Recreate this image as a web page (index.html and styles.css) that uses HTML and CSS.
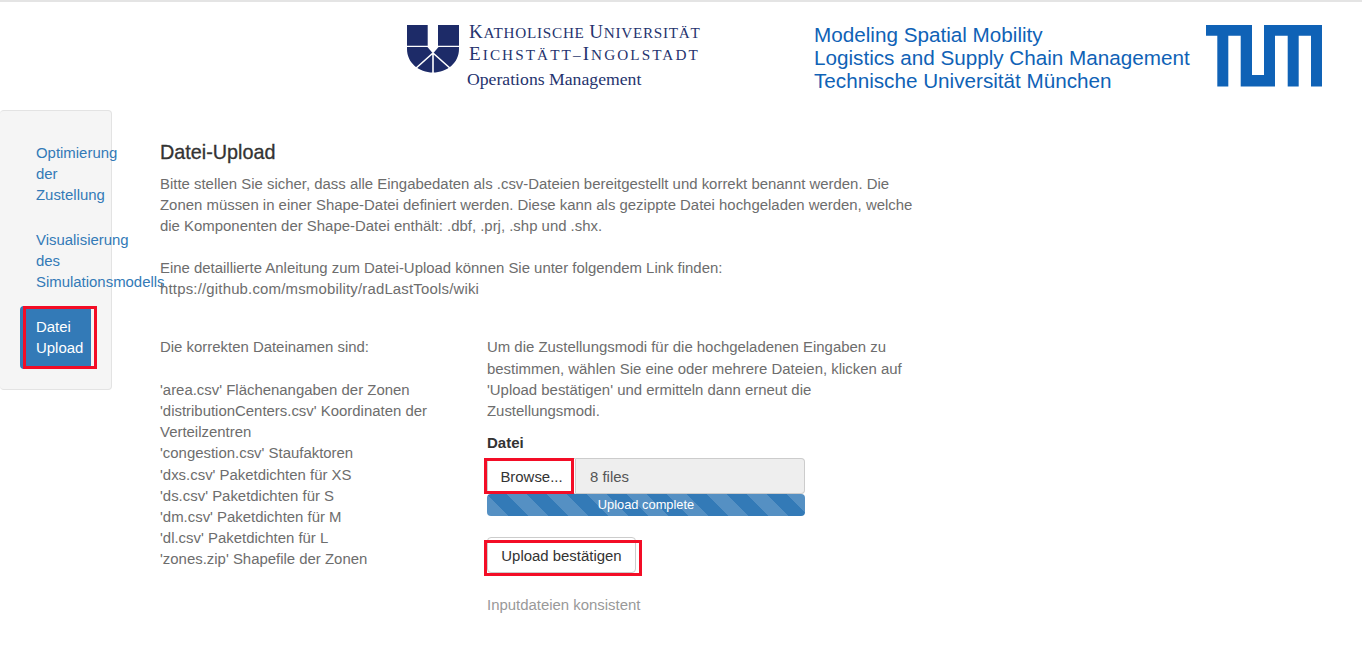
FILE: index.html
```html
<!DOCTYPE html>
<html lang="de">
<head>
<meta charset="utf-8">
<title>Datei-Upload</title>
<link rel="stylesheet" href="styles.css">
</head>
<body>
<header class="header">
  <div class="ku">
    <svg class="ku-mark" viewBox="0 0 52 48" aria-hidden="true">
      <path class="ku-fill" d="M0 0H20.7V20.7H0ZM31 0H52V20.7H31ZM0 22H52V24C52 38 40 47.5 26 47.5C12 47.5 0 38 0 24Z"/>
      <path class="ku-notch" d="M20 21.5L26 28.5L32 21.5Z"/>
      <path class="ku-cut" d="M26 28V48M26 28L7.5 44.5M26 28L44.5 44.5"/>
    </svg>
    <div class="ku-text">
      <div class="ku-line ku-first"><span class="ku-cap">K</span>atholische <span class="ku-cap">U</span>niversität</div>
      <div class="ku-line ku-second"><span class="ku-cap">E</span>ichstätt–<span class="ku-cap">I</span>ngolstadt</div>
      <div class="ku-sub">Operations Management</div>
    </div>
  </div>
  <div class="tum-text">
    <div>Modeling Spatial Mobility</div>
    <div>Logistics and Supply Chain Management</div>
    <div>Technische Universität München</div>
  </div>
  <svg class="tum-mark" viewBox="0 0 116 61.4" aria-hidden="true">
    <path class="tum-fill" d="M0 0H46V50H58V0H116V61.4H105V10.7H92.7V61.4H81.7V10.7H69V61.4H34.7V10.7H22.3V61.4H11.3V10.7H0Z"/>
  </svg>
</header>
<div class="layout">
  <nav class="well">
    <a class="pill" href="#">Optimierung der Zustellung</a>
    <a class="pill" href="#">Visualisierung des Simulationsmodells</a>
    <a class="pill active marked" href="#">Datei Upload</a>
  </nav>
  <main class="main">
    <h1 class="title">Datei-Upload</h1>
    <p class="intro">Bitte stellen Sie sicher, dass alle Eingabedaten als .csv-Dateien bereitgestellt und korrekt benannt werden. Die Zonen müssen in einer Shape-Datei definiert werden. Diese kann als gezippte Datei hochgeladen werden, welche die Komponenten der Shape-Datei enthält: .dbf, .prj, .shp und .shx.</p>
    <p class="intro">Eine detaillierte Anleitung zum Datei-Upload können Sie unter folgendem Link finden:<br><span class="url">https://github.com/msmobility/radLastTools/wiki</span></p>
    <div class="columns">
      <section class="names">
        <p class="names-head">Die korrekten Dateinamen sind:</p>
        <p class="names-list">'area.csv' Flächenangaben der Zonen<br>'distributionCenters.csv' Koordinaten der Verteilzentren<br>'congestion.csv' Staufaktoren<br>'dxs.csv' Paketdichten für XS<br>'ds.csv' Paketdichten für S<br>'dm.csv' Paketdichten für M<br>'dl.csv' Paketdichten für L<br>'zones.zip' Shapefile der Zonen</p>
      </section>
      <section class="upload">
        <p class="upload-text">Um die Zustellungsmodi für die hochgeladenen Eingaben zu bestimmen, wählen Sie eine oder mehrere Dateien, klicken auf 'Upload bestätigen' und ermitteln dann erneut die Zustellungsmodi.</p>
        <div class="field-label">Datei</div>
        <div class="file-row">
          <button class="btn browse marked" type="button">Browse...</button>
          <div class="file-name">8 files</div>
        </div>
        <div class="progress">Upload complete</div>
        <button class="btn confirm marked" type="button">Upload bestätigen</button>
        <p class="status">Inputdateien konsistent</p>
      </section>
    </div>
  </main>
</div>
</body>
</html>
```
FILE: styles.css
```css
* { box-sizing: border-box; }
html, body { height: 100%; }
body {
  margin: 0;
  overflow: hidden;
  background: #fff;
  border-top: 2px solid #e4e4e4;
  font-family: "Liberation Sans", Arial, sans-serif;
  font-size: 14.93px;
  line-height: 21.2px;
  color: #6d6d6d;
}
.header {
  display: flex;
  align-items: flex-start;
  height: 108px;
  padding: 23.3px 0 0 407px;
}
.ku { display: flex; width: 407px; }
.ku-mark { width: 52px; height: 48px; flex: none; }
.ku-fill { fill: #1d2b68; }
.ku-notch { fill: #fff; }
.ku-cut { stroke: #fff; stroke-width: 1.6px; fill: none; }
.ku-text { margin: -3.5px 0 0 10px; font-family: "Liberation Serif", serif; color: #25336e; }
.ku-line {
  height: 22px;
  font-size: 15.2px;
  line-height: 22px;
  text-transform: uppercase;
  white-space: nowrap;
}
.ku-cap { font-size: 19px; line-height: 0; }
.ku-first { letter-spacing: .75px; }
.ku-second { letter-spacing: 2.1px; }
.ku-sub { font-size: 17.7px; line-height: 26px; margin-left: -2px; white-space: nowrap; }
.tum-text {
  width: 392px;
  margin-top: -2px;
  font-size: 20.68px;
  line-height: 23px;
  color: #0f62b6;
  white-space: nowrap;
}
.tum-mark { width: 116px; height: 61.4px; flex: none; }
.tum-fill { fill: #0f62b6; }
.layout { display: flex; align-items: flex-start; }
.well {
  width: 112px;
  height: 280px;
  flex: none;
  padding: 29.7px 20px 0;
  background: #f5f5f5;
  border: 1px solid #e3e3e3;
  border-left: 0;
  border-radius: 4px;
}
.pill {
  display: block;
  width: 71px;
  padding: 1px 16px 11px;
  margin-bottom: 11.3px;
  color: #337ab7;
  text-decoration: none;
}
.pill:nth-child(2) { margin-bottom: 2.6px; }
.pill.active {
  height: 63px;
  margin-bottom: 0;
  padding: 10px 16px;
  color: #fff;
  background: #337ab7;
  border-radius: 4px;
}
.marked { position: relative; }
.marked::after {
  content: "";
  position: absolute;
  border: 3px solid #f30d26;
  pointer-events: none;
}
.pill.marked::after { left: 3px; top: 0; right: -5.5px; bottom: 0; }
.main { width: 756px; margin-left: 48px; padding-top: 30px; }
.title {
  margin: 0 0 8.6px;
  font-size: 19.8px;
  line-height: 24px;
  font-weight: 400;
  color: #333;
  -webkit-text-stroke: 0.3px #333;
}
.intro { margin: 0 0 21px; }
.url { letter-spacing: .19px; }
.columns { display: flex; margin-top: 36.8px; }
.names { width: 327px; flex: none; padding-right: 40px; }
.names p { margin: 0; }
.names .names-head { margin-bottom: 21.2px; }
.upload { width: 423px; }
.upload-text { margin: 0 0 10.6px; }
.field-label {
  height: 26px;
  font-size: 15px;
  font-weight: 700;
  line-height: 21.2px;
  color: #333;
}
.file-row { display: flex; width: 318px; height: 36px; }
.btn {
  font: inherit;
  color: #333;
  background: #fff;
  border: 1px solid #ccc;
  border-radius: 4px;
  padding: 1px 0 0;
}
.browse { width: 89px; height: 36px; flex: none; border-radius: 4px 0 0 4px; }
.marked.browse::after { left: -4px; top: -1px; right: 1px; bottom: -1px; }
.file-name {
  flex: 1;
  padding: 7px 13px 0 14px;
  background: #eee;
  border: 1px solid #ccc;
  border-left: 0;
  border-radius: 0 4px 4px 0;
  color: #555;
}
.progress {
  width: 318px;
  height: 22px;
  margin-bottom: 21px;
  border-radius: 4px;
  background-color: #337ab7;
  background-image: linear-gradient(45deg, transparent 25%, rgba(255,255,255,.17) 25%, rgba(255,255,255,.17) 50%, transparent 50%, transparent 75%, rgba(255,255,255,.17) 75%);
  background-size: 40px 40px;
  color: #fff;
  text-align: center;
  font-size: 12.86px;
  line-height: 22px;
}
.confirm { display: block; width: 149px; height: 36px; }
.marked.confirm::after { left: -4px; top: 2px; right: -6.5px; bottom: -4px; }
.status { margin: 21px 0 0; color: #999; }
```
